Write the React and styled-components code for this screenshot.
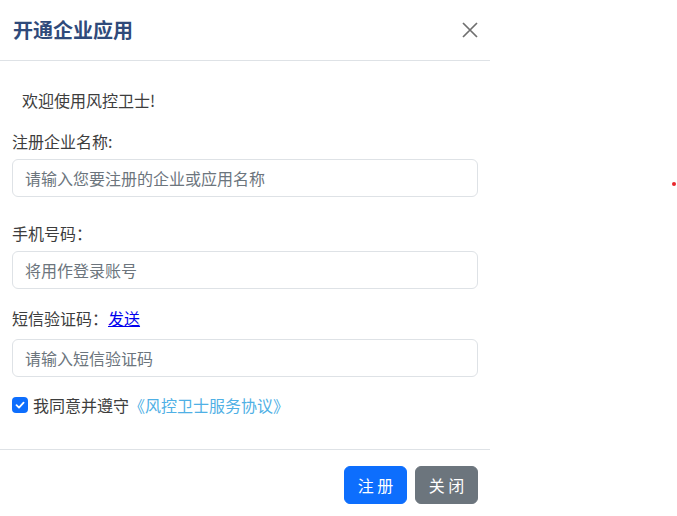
import styled, { createGlobalStyle } from 'styled-components';

const GlobalStyle = createGlobalStyle`
  html, body {
    margin: 0;
    padding: 0;
    background: #fff;
  }
  body {
    font-family: "Noto Sans CJK SC", "Noto Sans", "Liberation Sans", sans-serif;
    font-size: 16px;
    line-height: 24px;
    color: #3d3d3d;
  }
  * {
    box-sizing: border-box;
  }
`;

const Page = styled.div`
  position: relative;
  width: 677px;
  height: 516px;
`;

const Modal = styled.div`
  width: 490px;
  background: #fff;
  display: flex;
  flex-direction: column;
`;

const Header = styled.div`
  height: 61px;
  padding: 0 12px 0 13px;
  display: flex;
  align-items: center;
  justify-content: space-between;
  border-bottom: 1px solid #dee2e6;
`;

const Title = styled.h5`
  margin: 0;
  font-size: 20px;
  font-weight: 700;
  line-height: 24px;
  color: #2f4a7a;
`;

const CloseButton = styled.button`
  width: 16px;
  height: 16px;
  padding: 0;
  border: 0;
  background: transparent;
  display: flex;
  cursor: pointer;
`;

const Body = styled.div`
  padding: 0 12px 32px;
  display: flex;
  flex-direction: column;
`;

const Welcome = styled.p`
  margin: 27px 0 0;
  padding-left: 10px;
`;

const Label = styled.label`
  display: block;
  margin-top: ${(p) => p.$top}px;
  margin-bottom: ${(p) => p.$bottom}px;
`;

const SendLink = styled.a`
  color: #0000ee;
  text-decoration: underline;
  cursor: pointer;
`;

const Input = styled.input`
  display: block;
  width: 100%;
  height: 38px;
  padding: 6px 12px;
  font: inherit;
  color: #212529;
  border: 1px solid #dee2e6;
  border-radius: 6px;
  outline: none;

  &::placeholder {
    color: #6c757d;
    opacity: 1;
  }
`;

const AgreeRow = styled.div`
  margin-top: 16px;
  display: flex;
  align-items: center;
  gap: 5px;
`;

const Check = styled.span`
  width: 16px;
  height: 16px;
  border-radius: 4px;
  background: #0d6efd;
  display: flex;
  align-items: center;
  justify-content: center;
`;

const Protocol = styled.a`
  color: #4fb0e5;
  text-decoration: none;
  cursor: pointer;
`;

const Footer = styled.div`
  border-top: 1px solid #dee2e6;
  padding: 16px 12px 12px;
  display: flex;
  justify-content: flex-end;
  gap: 8px;
`;

const Button = styled.button`
  width: 63px;
  height: 38px;
  padding: 6px 0;
  font: inherit;
  color: #fff;
  border: 1px solid ${(p) => (p.$variant === 'primary' ? '#0d6efd' : '#6c757d')};
  background: ${(p) => (p.$variant === 'primary' ? '#0d6efd' : '#6c757d')};
  border-radius: 6px;
  cursor: pointer;
`;

const Dot = styled.span`
  position: absolute;
  left: 672px;
  top: 182px;
  width: 4px;
  height: 4px;
  border-radius: 50%;
  background: #e8252b;
`;

function App() {
  return (
    <Page>
      <GlobalStyle />
      <Modal>
        <Header>
          <Title>开通企业应用</Title>
          <CloseButton aria-label="关闭">
            <svg width="16" height="16" viewBox="0 0 16 16">
              <path d="M1 1L15 15M15 1L1 15" stroke="#6f6f6f" strokeWidth="1.7" fill="none" />
            </svg>
          </CloseButton>
        </Header>
        <Body>
          <Welcome>欢迎使用风控卫士!</Welcome>

          <Label $top={17} $bottom={6}>注册企业名称:</Label>
          <Input placeholder="请输入您要注册的企业或应用名称" />

          <Label $top={24} $bottom={6}>手机号码：</Label>
          <Input placeholder="将用作登录账号" />

          <Label $top={17} $bottom={9}>
            短信验证码：<SendLink>发送</SendLink>
          </Label>
          <Input placeholder="请输入短信验证码" />

          <AgreeRow>
            <Check>
              <svg width="12" height="12" viewBox="0 0 12 12">
                <path d="M2.5 6.2L5 8.6L9.6 3.6" stroke="#fff" strokeWidth="1.8" fill="none" strokeLinecap="round" strokeLinejoin="round" />
              </svg>
            </Check>
            <span>
              我同意并遵守<Protocol>《风控卫士服务协议》</Protocol>
            </span>
          </AgreeRow>
        </Body>
        <Footer>
          <Button $variant="primary">注 册</Button>
          <Button $variant="secondary">关 闭</Button>
        </Footer>
      </Modal>
      <Dot />
    </Page>
  );
}

export default App;
